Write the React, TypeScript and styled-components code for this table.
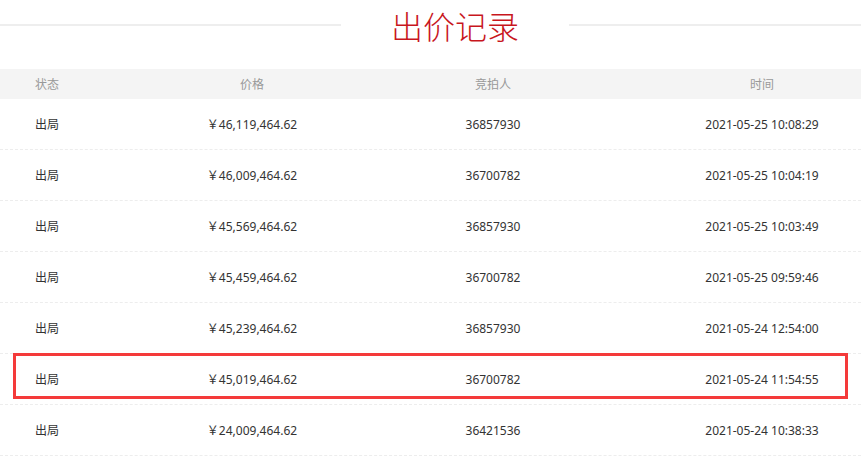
import React from "react";
import styled, { createGlobalStyle } from "styled-components";

const Global = createGlobalStyle`
  html, body { margin: 0; padding: 0; background: #fff; }
  body { font-family: "Noto Sans", "Noto Sans CJK SC", sans-serif; }
`;

const Page = styled.div`
  width: 861px;
  overflow: hidden;
`;

const TitleBar = styled.div`
  display: flex;
  align-items: center;
  height: 50px;
  margin-bottom: 19px;
`;

const Rule = styled.div<{ $w?: number }>`
  flex: ${(p) => (p.$w ? `0 0 ${p.$w}px` : "1")};
  height: 2px;
  background: #eeeeee;
`;

const Title = styled.h2`
  margin: 0 50px;
  font-family: "Noto Sans CJK SC", sans-serif;
  font-size: 32px;
  font-weight: 300;
  line-height: 50px;
  color: #c8161d;
`;

const Grid = styled.div<{ $head?: boolean }>`
  position: relative;
  display: grid;
  grid-template-columns: 93px 318px 252px 198px;
  align-items: center;
  height: ${(p) => (p.$head ? "30px" : "50px")};
  background: ${(p) => (p.$head ? "#f4f4f4" : "#fff")};
  border-bottom: ${(p) => (p.$head ? "none" : "1px dashed #ededed")};
  color: ${(p) => (p.$head ? "#999" : "#333")};
  font-size: 12px;
`;

const Cell = styled.div<{ $first?: boolean; $padR?: number }>`
  text-align: ${(p) => (p.$first ? "left" : "center")};
  padding-left: ${(p) => (p.$first ? "35px" : "0")};
  padding-right: ${(p) => p.$padR ?? 0}px;
  white-space: nowrap;
`;

const Highlight = styled.div`
  position: absolute;
  left: 13px;
  top: -1px;
  width: 835px;
  height: 46px;
  box-sizing: border-box;
  border: 3px solid #f43a3a;
  pointer-events: none;
`;

const rows = [
  ["出局", "￥46,119,464.62", "36857930", "2021-05-25 10:08:29"],
  ["出局", "￥46,009,464.62", "36700782", "2021-05-25 10:04:19"],
  ["出局", "￥45,569,464.62", "36857930", "2021-05-25 10:03:49"],
  ["出局", "￥45,459,464.62", "36700782", "2021-05-25 09:59:46"],
  ["出局", "￥45,239,464.62", "36857930", "2021-05-24 12:54:00"],
  ["出局", "￥45,019,464.62", "36700782", "2021-05-24 11:54:55"],
  ["出局", "￥24,009,464.62", "36421536", "2021-05-24 10:38:33"],
];

const padR = [0, 0, 88, 0];

export default function App() {
  return (
    <Page>
      <Global />
      <TitleBar>
        <Rule $w={341} />
        <Title>出价记录</Title>
        <Rule />
      </TitleBar>
      <Grid $head>
        {["状态", "价格", "竞拍人", "时间"].map((h, i) => (
          <Cell key={h} $first={i === 0} $padR={padR[i]}>{h}</Cell>
        ))}
      </Grid>
      {rows.map((r, ri) => (
        <Grid key={ri}>
          {r.map((c, i) => (
            <Cell key={i} $first={i === 0} $padR={padR[i]}>{c}</Cell>
          ))}
          {ri === 5 && <Highlight />}
        </Grid>
      ))}
    </Page>
  );
}
